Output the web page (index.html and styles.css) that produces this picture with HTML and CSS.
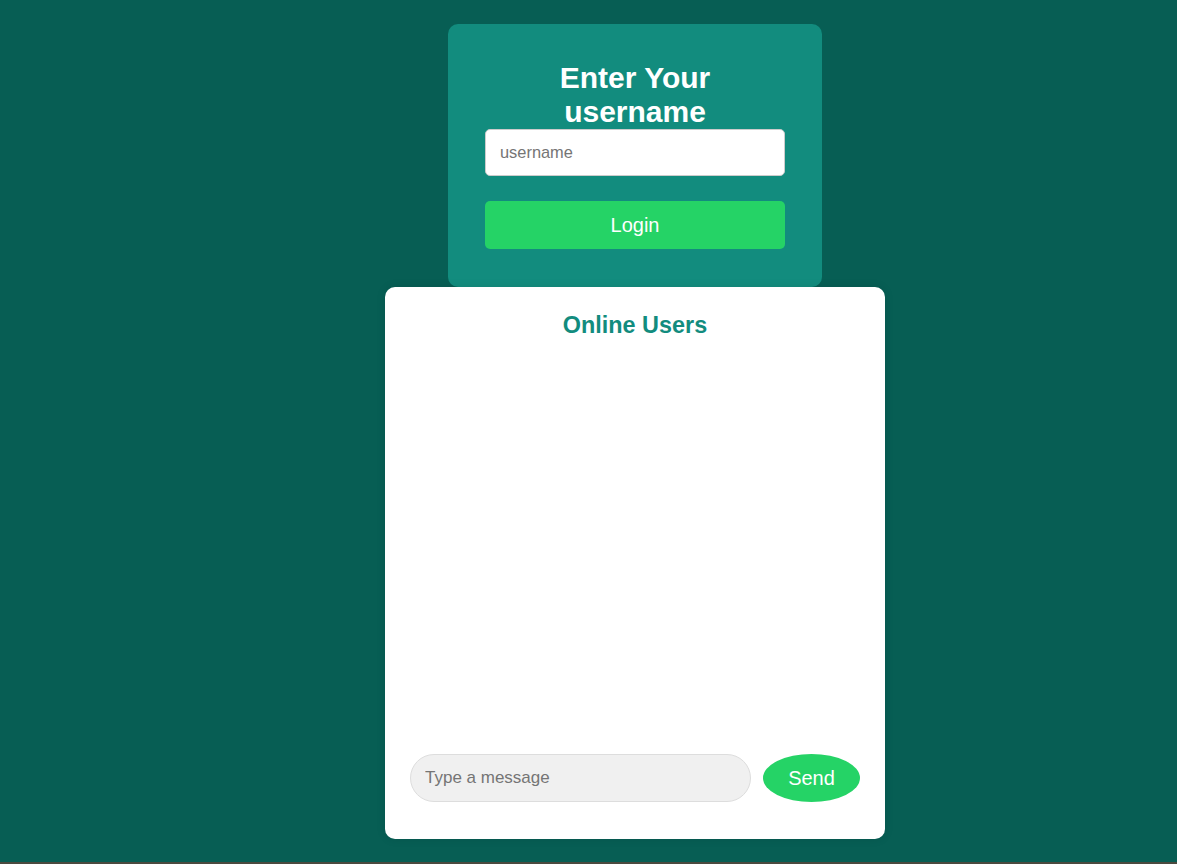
FILE: index.html
```html
<!DOCTYPE html>
<html lang="en">
<head>
<meta charset="utf-8">
<title>Chat</title>
<link rel="stylesheet" href="styles.css">
</head>
<body>
<div class="page">
  <div class="login-card">
    <h2 class="login-title">Enter Your username</h2>
    <input class="login-input" type="text" placeholder="username">
    <button class="login-btn">Login</button>
  </div>
  <div class="chat-card">
    <h3 class="chat-title">Online Users</h3>
    <div class="chat-body"></div>
    <div class="chat-row">
      <input class="msg-input" type="text" placeholder="Type a message">
      <button class="send-btn">Send</button>
    </div>
  </div>
</div>
</body>
</html>
```

FILE: styles.css
```css
html {
  background: #4b4a3f;
  height: 100%;
}
body {
  margin: 0;
  height: 862px;
  background: #075e54;
  font-family: "Liberation Sans", Arial, sans-serif;
  font-size: 20px;
}
.page {
  display: flex;
  flex-direction: column;
  align-items: center;
  padding-top: 24px;
  padding-left: 93px;
}
.login-card {
  width: 374px;
  box-sizing: border-box;
  background: #128c7e;
  border-radius: 10px;
  padding: 37px 37px 38px;
  display: flex;
  flex-direction: column;
  align-items: center;
}
.login-title {
  margin: 0;
  color: #fff;
  font-size: 30px;
  font-weight: bold;
  text-align: center;
  max-width: 260px;
}
.login-input {
  width: 300px;
  height: 47px;
  box-sizing: border-box;
  border: 1px solid #ccc;
  border-radius: 5px;
  padding: 0 14px;
  font-family: inherit;
  font-size: 16.4px;
  color: #333;
  background: #fff;
  outline: none;
}
.login-input::placeholder { color: #757575; }
.login-btn {
  margin-top: 25px;
  width: 300px;
  height: 48px;
  border: none;
  border-radius: 5px;
  background: #25d366;
  color: #fff;
  font-family: inherit;
  font-size: 20px;
}
.chat-card {
  width: 500px;
  height: 552px;
  box-sizing: border-box;
  background: #fff;
  border-radius: 10px;
  box-shadow: 0 0 10px rgba(0, 0, 0, 0.1);
  padding: 25px 25px 37px;
  display: flex;
  flex-direction: column;
}
.chat-title {
  margin: 0;
  text-align: center;
  color: #128c7e;
  font-size: 23.4px;
  font-weight: bold;
}
.chat-body { flex: 1; }
.chat-row {
  display: flex;
  gap: 12px;
  align-items: center;
}
.msg-input {
  width: 341px;
  height: 48px;
  box-sizing: border-box;
  border: 1px solid #ddd;
  border-radius: 24px;
  background: #f0f0f0;
  padding: 0 14px;
  font-family: inherit;
  font-size: 17px;
  outline: none;
}
.msg-input::placeholder { color: #757575; }
.send-btn {
  width: 97px;
  height: 48px;
  border: none;
  border-radius: 50%;
  background: #25d366;
  color: #fff;
  font-family: inherit;
  font-size: 20px;
}
```
